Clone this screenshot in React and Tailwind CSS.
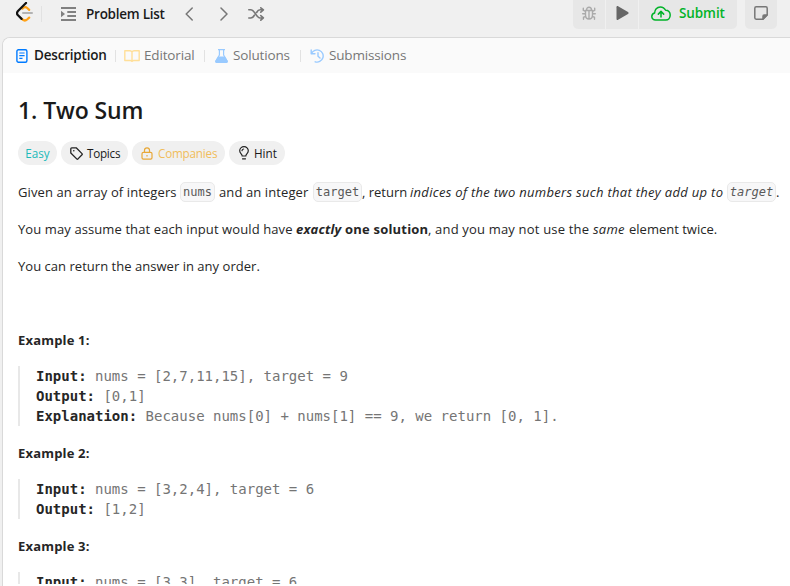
import React from "react";

function LeetLogo() {
  return (
    <svg className="h-[21px] w-[17px] shrink-0" viewBox="0 0 17 21" fill="none" strokeLinecap="round" strokeLinejoin="round">
      <path d="M5.4 16.6C7.4 18.8 9.6 18.9 11.4 17.3L13.2 15.6" stroke="#ffa116" strokeWidth="2.2" />
      <path d="M6.4 6.6C8.3 4.7 9.8 4.7 11.2 6L13.2 7.9" stroke="#ffa116" strokeWidth="2.2" />
      <path d="M10 .9 2 9C.7 10.5.7 12 2 13.3L5.6 16.9" stroke="#111" strokeWidth="2.2" />
      <path d="M7 11H16" stroke="#b3b3b3" strokeWidth="2" />
    </svg>
  );
}

function ListIcon() {
  return (
    <svg className="h-[14px] w-[15px] shrink-0" viewBox="0 0 15 14" fill="none" stroke="#808080" strokeWidth="1.8">
      <path d="M0 1H15M6.3 5H15M6.3 9H15M0 13H15" />
      <path d="M0 3.8 4 7 0 10.2Z" fill="#808080" stroke="none" />
    </svg>
  );
}

function Chevron({ d }) {
  return (
    <svg className="h-[14px] w-[9px] shrink-0" viewBox="0 0 9 14" fill="none" stroke="#777" strokeWidth="1.5" strokeLinecap="round" strokeLinejoin="round">
      <path d={d} />
    </svg>
  );
}

function Shuffle() {
  return (
    <svg className="h-[14px] w-[17px] shrink-0" viewBox="0 0 17 14" fill="none" stroke="#777" strokeWidth="1.6" strokeLinecap="round" strokeLinejoin="round">
      <path d="M.8 2.7H2.6C7.3 2.7 7.7 11 12.2 11H15.2M.8 11H2.6C4.6 11 5.7 9.6 6.4 8.2M8.6 5.5C9.4 4 10.5 2.7 12.2 2.7H15.2M12.8 .8 15.4 2.9 12.8 5.2M12.8 8.6 15.4 10.8 12.8 13.2" />
    </svg>
  );
}

function Bug() {
  return (
    <svg className="h-[14px] w-[14px]" viewBox="0 0 14 14" fill="none" stroke="#aaa" strokeWidth="1.4" strokeLinecap="round">
      <path d="M3.5 4.5H10.5V9C10.5 11.5 9 13 7 13S3.5 11.5 3.5 9ZM4.5 4.2C4.5 .2 9.5 .2 9.5 4.2M7 4.5V13M3.3 7.8H.7M10.7 7.8H13.3M3.4 5.4 1.3 4.3V2.3M10.6 5.4 12.7 4.3V2.3M3.8 10.3 1.5 11.3V13.2M10.2 10.3 12.5 11.3V13.2" />
    </svg>
  );
}

function Header() {
  return (
    <header className="flex h-[37px] shrink-0 items-start bg-[#f0f0f0]">
      <div className="flex h-[27px] items-center pl-4">
        <div className="pb-[2px]"><LeetLogo /></div>
        <div className="ml-2 h-4 w-px bg-[#e2e2e2]" />
        <div className="w-[19px]" />
        <ListIcon />
        <span className="ml-[10px] w-[80px] whitespace-nowrap pt-px text-[13.5px] font-semibold leading-5 tracking-[-0.25px] text-[#1a1a1a]">Problem List</span>
        <div className="w-[19px]" />
        <Chevron d="M7.2 1 1.2 7 7.2 13" />
        <div className="w-[26px]" />
        <Chevron d="M1 1 7 7 1 13" />
        <div className="w-[19px]" />
        <Shuffle />
      </div>
      <div className="ml-auto flex h-[29px] gap-2 pr-[13px]">
        <div className="flex gap-px overflow-hidden rounded-b-[5px]">
          <div className="flex w-8 items-center justify-center bg-[#e7e7e7] pb-[3px]"><Bug /></div>
          <div className="flex w-8 items-center justify-center bg-[#e7e7e7] pb-[3px]">
            <svg className="h-[14px] w-[13px]" viewBox="0 0 13 14" fill="#666"><path d="M.5 1.3C.5.2 1.2-.2 2.1.3L12 6.1C12.8 6.6 12.8 7.4 12 7.9L2.1 13.7C1.2 14.2.5 13.8.5 12.7Z" /></svg>
          </div>
          <div className="flex w-[98px] items-center bg-[#e7e7e7] pb-[3px] pl-3">
            <svg className="h-[15px] w-5" viewBox="0 0 20 15" fill="none" stroke="#01b328" strokeWidth="1.5" strokeLinecap="round" strokeLinejoin="round">
              <path d="M4.5 14C2.3 14 .8 12.5.8 10.5.8 8.7 2 7.5 3.6 7.1 3.6 3.6 6 .9 9.3.9 11.7.9 13.6 2.2 14.6 4.3 17.3 4.2 19.2 6.2 19.2 9 19.2 12 17.3 14 14.8 14ZM10 11V5.8M7.3 8.1 10 5.4 12.7 8.1" />
            </svg>
            <span className="ml-[8px] text-[13.5px] font-semibold tracking-[-0.1px] text-[#01b328]">Submit</span>
          </div>
        </div>
        <div className="flex w-8 items-center justify-center rounded-b-[5px] bg-[#e7e7e7] pb-[3px]">
          <svg className="h-[14px] w-[14px]" viewBox="0 0 14 14" fill="none" stroke="#777" strokeWidth="1.5" strokeLinejoin="round">
            <path d="M2.2.8H11.8Q13.2.8 13.2 2.2V9L9 13.2H2.2Q.8 13.2.8 11.8V2.2Q.8.8 2.2.8Z" /><path d="M9 13V10.2Q9 9 10.2 9H13Z" fill="#777" />
          </svg>
        </div>
      </div>
    </header>
  );
}

function Divider({ className }) {
  return <div className={`h-3 w-px shrink-0 bg-[#e2e2e2] ${className}`} />;
}

function Tabs() {
  return (
    <nav className="flex h-[35px] shrink-0 items-center whitespace-nowrap bg-[#fafafa] pl-[13px] text-[13.5px] tracking-[-0.16px] text-[#777]">
      <svg className="h-[14px] w-[12px] shrink-0" viewBox="0 0 12 14" fill="none" stroke="#007bff" strokeWidth="1.4">
        <rect x=".9" y=".7" width="10" height="12.6" rx="1.5" /><path d="M3.3 4H8.6M3.3 6.7H8.6M3.3 9.4H6.5" strokeWidth="1.2" />
      </svg>
      <span className="ml-[6px] w-[73px] font-semibold tracking-[-0.2px] text-[#1a1a1a]">Description</span>
      <Divider className="ml-2" />
      <svg className="ml-[8px] h-3 w-4 shrink-0" viewBox="0 0 16 12" fill="none" stroke="#ffdf99" strokeWidth="1.4" strokeLinejoin="round">
        <path d="M8 2C7.5 1 6.8.8 6 .8H.8V10.5H6.2C7.2 10.5 7.7 10.8 8 11.5 8.3 10.8 8.8 10.5 9.8 10.5H15.2V.8H10C9.2.8 8.5 1 8 2V11" />
      </svg>
      <span className="ml-1 w-[51px]">Editorial</span>
      <Divider className="ml-[9px]" />
      <svg className="ml-[10px] h-[14px] w-[13px] shrink-0" viewBox="0 0 13 14" fill="none" stroke="#99caff" strokeWidth="1.2" strokeLinejoin="round">
        <path d="M3 .7H10M4.4 1V6L1 11.8C.5 12.7.8 13.3 1.8 13.3H11.2C12.2 13.3 12.5 12.7 12 11.8L8.6 6V1" /><path d="M3.4 8H9.6L12.2 12.3Q12 13.3 11.2 13.3H1.8Q1 13.3.8 12.3Z" fill="#99caff" />
      </svg>
      <span className="ml-[5px] w-[58px]">Solutions</span>
      <Divider className="ml-[9px]" />
      <svg className="ml-[9px] h-[14px] w-[15px] shrink-0" viewBox="0 0 15 14" fill="none" stroke="#99caff" strokeWidth="1.4" strokeLinecap="round" strokeLinejoin="round">
        <path d="M1.2 1V4.8H5M1.5 4.5A6.1 6.1 0 1 1 5.2 12.8M8 3.8V7.2L10 9" />
      </svg>
      <span className="ml-1">Submissions</span>
    </nav>
  );
}

function Pill({ className, children }) {
  return <div className={`flex h-6 items-center whitespace-nowrap rounded-full bg-[#f0f0f0] text-[11.7px] ${className}`}>{children}</div>;
}

function Code({ className, children }) {
  return <code className={`inline-block h-5 rounded-[5px] border border-[#e9e9e9] bg-[#f7f7f8] text-center font-['DejaVu_Sans_Mono',monospace] text-[12px] leading-[19px] text-[#595959] ${className}`}>{children}</code>;
}

function Example({ className, children }) {
  return <pre className={`border-l-2 border-[#e8e8e8] pl-4 font-['DejaVu_Sans_Mono',monospace] text-[14px] leading-5 text-[#757575] ${className}`}>{children}</pre>;
}

function Label({ children }) {
  return <strong className="font-bold text-[#262626]">{children}</strong>;
}

export default function App() {
  return (
    <div className="flex h-[586px] w-[790px] flex-col overflow-hidden bg-[#f0f0f0] font-['Open_Sans','Noto_Sans',sans-serif]">
      <Header />
      <div className="ml-[2px] flex min-h-0 flex-1 flex-col overflow-hidden rounded-tl-lg border-l border-t border-[#d9d9d9] bg-white">
        <Tabs />
        <main className="mb-[2px] min-h-0 flex-1 overflow-hidden pl-[15px] text-[13px] leading-5 text-[#262626]">
          <h1 className="mt-[21px] h-8 whitespace-nowrap text-[23px] font-semibold leading-8 tracking-[-0.1px] text-[#1a1a1a]">1. Two Sum</h1>
          <div className="mt-[15px] flex gap-1">
            <Pill className="w-[39px] justify-center text-[#1cbaba]">Easy</Pill>
            <Pill className="w-[67px] pl-[9px] tracking-[-0.25px] text-[#1a1a1a]">
              <svg className="mr-1 h-[13px] w-[13px]" viewBox="0 0 13 13" fill="none" stroke="#222" strokeWidth="1.3" strokeLinejoin="round"><path d="M.8 1.8Q.8.8 1.8.8H6.2L12 6.6Q12.6 7.2 12 7.8L8 11.9Q7.3 12.5 6.7 11.9L.8 6Z" /><circle cx="3.8" cy="3.8" r=".8" fill="#222" stroke="none" /></svg>
              Topics
            </Pill>
            <Pill className="w-[93px] pl-[9px] tracking-[-0.2px] text-[#f0bd5b]">
              <svg className="mr-[5px] h-[13px] w-[12px]" viewBox="0 0 12 13" fill="none" stroke="#e8a838" strokeWidth="1.2"><rect x="1" y="5.4" width="10" height="6.8" rx="1.4" /><path d="M3.5 5.2V3.3C3.5 .1 8.5 .1 8.5 3.3V5.2M6 8V9.5" /></svg>
              Companies
            </Pill>
            <Pill className="w-[56px] pl-[10px] text-[#1a1a1a]">
              <svg className="mr-[5px] h-[14px] w-[10px]" viewBox="0 0 10 14" fill="none" stroke="#222" strokeWidth="1.2" strokeLinecap="round"><path d="M3.2 10C3.2 8.2.7 7.5.7 4.8A4.3 4.2 0 0 1 9.3 4.8C9.3 7.5 6.8 8.2 6.8 10ZM3.5 12.8H6.5M3 4.7Q3.2 3.2 4.6 3" /></svg>
              Hint
            </Pill>
          </div>
          <p className="mt-[17px] flex h-5 items-center whitespace-pre">
            <span className="w-[162px] tracking-[0.1px]">Given an array of integers</span>
            <Code className="w-[35px]">nums</Code>
            <span className="ml-1 w-[94px] tracking-[0.1px]">and an integer</span>
            <Code className="w-[49px]">target</Code>
            <span className="w-[48px]">, return</span>
            <em className="w-[317px] tracking-[0.3px]">indices of the two numbers such that they add up to</em>
            <Code className="w-[49px] italic">target</Code>
            <span>.</span>
          </p>
          <p className="mt-[17px] flex h-5 whitespace-pre">
            <span className="w-[278px] tracking-[0.1px]">You may assume that each input would have</span>
            <strong className="w-[132px] font-bold tracking-[0.2px]"><em>exactly</em> one solution</strong>
            <span className="w-[165px] tracking-[0.18px]">, and you may not use the</span>
            <em className="w-[36px] tracking-[0.25px]">same</em>
            <span>element twice.</span>
          </p>
          <p className="mt-[17px] h-5 whitespace-nowrap tracking-[0.03px]">You can return the answer in any order.</p>
          <p className="mt-[54px] h-5 font-bold tracking-[0.18px]">Example 1:</p>
          <Example className="mt-4"><Label>Input:</Label> nums = [2,7,11,15], target = 9{"\n"}<Label>Output:</Label> [0,1]{"\n"}<Label>Explanation:</Label> Because nums[0] + nums[1] == 9, we return [0, 1].</Example>
          <p className="mt-[17px] h-5 font-bold tracking-[0.18px]">Example 2:</p>
          <Example className="mt-4"><Label>Input:</Label> nums = [3,2,4], target = 6{"\n"}<Label>Output:</Label> [1,2]</Example>
          <p className="mt-[17px] h-5 font-bold tracking-[0.18px]">Example 3:</p>
          <Example className="mt-4"><Label>Input:</Label> nums = [3,3], target = 6</Example>
        </main>
      </div>
    </div>
  );
}
